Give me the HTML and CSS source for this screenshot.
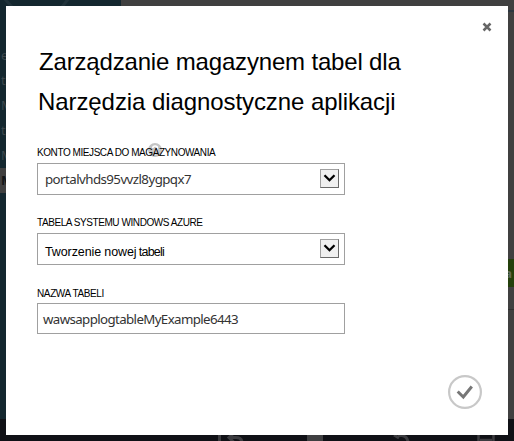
FILE: index.html
```html
<!DOCTYPE html>
<html lang="pl">
<head>
<meta charset="utf-8">
<title>Zarządzanie magazynem tabel</title>
<link rel="stylesheet" href="styles.css">
</head>
<body>
<div class="portal">
  <div class="workspace">
    <nav class="sidebar">
      <svg class="swirl" width="121" height="6" viewBox="0 0 121 6"><path d="M4-2 12 7M69-2 62 7" stroke="#20323a" stroke-width="3"/></svg>
      <ul class="sites"><li>e</li><li>to</li><li>M</li><li>to</li><li>M</li><li class="current">M</li></ul>
    </nav>
    <main class="content">
      <div class="rule-top"></div>
      <div class="badge">a</div>
      <div class="rule-bottom"></div>
    </main>
  </div>
  <footer class="commands">
    <svg width="514" height="22" viewBox="0 0 514 22" fill="none" stroke="#3b3b3f" stroke-width="3">
      <path d="M219.500 16v8M229 18.500h7q5 0 6 4M234 14l-5 4.500 5 5"/>
      <path d="M307 16h16v6h-16z" fill="#3f3f41" stroke="none"/>
      <path d="M394 16l5 3M398 16.500h4q5 1 6 6"/>
      <path d="M478.500 16v8M493.500 16v8M480 21h12" stroke-width="2.500"/>
    </svg>
  </footer>
</div>
<section class="dialog">
  <button class="close" aria-label="Zamknij"><svg width="10" height="10" viewBox="0 0 10 10"><path d="M1.500 1.500 8.500 8.500M8.500 1.500 1.500 8.500" stroke="#666" stroke-width="2.500"/></svg></button>
  <h1><span class="line-one">Zarządzanie magazynem tabel dla</span><br><span class="line-two">Narzędzia diagnostyczne aplikacji</span></h1>
  <div class="field">
    <div class="label"><svg class="help" width="14" height="14" viewBox="0 0 14 14"><circle cx="7" cy="7" r="7" fill="#c4c4c4"/><path d="M4.800 5q0-2 2.300-2t2.300 2q0 1.200-1.200 1.900T7 8.600M7 9.800v1.600" fill="none" stroke="#fff" stroke-width="1.600"/></svg><span class="label-text account">KONTO MIEJSCA DO MAGAZYNOWANIA</span></div>
    <div class="control select"><span class="value storage">portalvhds95vvzl8ygpqx7</span><span class="arrow"><svg width="17" height="17" viewBox="0 0 17 17"><path d="M3.500 5.200 8.500 10.200 13.500 5.200" fill="none" stroke="#000" stroke-width="2.300"/></svg></span></div>
  </div>
  <div class="field">
    <div class="label"><span class="label-text azure">TABELA SYSTEMU WINDOWS AZURE</span></div>
    <div class="control select"><span class="value create">Tworzenie nowej <span class="tight">tabeli</span></span><span class="arrow"><svg width="17" height="17" viewBox="0 0 17 17"><path d="M3.500 5.200 8.500 10.200 13.500 5.200" fill="none" stroke="#000" stroke-width="2.300"/></svg></span></div>
  </div>
  <div class="field">
    <div class="label"><span class="label-text table">NAZWA TABELI</span></div>
    <div class="control input"><span class="value name">wawsapplogtableMyExample6443</span></div>
  </div>
  <button class="confirm" aria-label="OK"><svg width="34" height="34" viewBox="0 0 34 34" fill="none"><circle cx="17" cy="17" r="15.900" stroke="#c8c8c8" stroke-width="2.200"/><path d="M9.700 16.500 15.300 22 23.800 11.500" stroke="#777" stroke-width="3"/></svg></button>
</section>
</body>
</html>
```
FILE: styles.css
```css
* { box-sizing: border-box; }
body { margin: 0; width: 514px; height: 441px; overflow: hidden; font-family: "Liberation Sans", Arial, sans-serif; }
.portal { height: 441px; display: flex; flex-direction: column; background: #404040; }
.workspace { display: flex; height: 419px; }
.sidebar { width: 121px; background: #14272f; overflow: hidden; }
.swirl { display: block; }
.sites { list-style: none; margin: 37px 0 0; padding: 0; font: 13px/25px "Open Sans", sans-serif; color: #3f494e; }
.sites li { height: 25px; padding-left: 1px; }
.sites .current { background: #404040; color: #101417; font-weight: bold; }
.content { flex: 1; padding-top: 10px; }
.rule-top { height: 2px; background: #2c3740; }
.badge { margin-top: 247px; height: 28px; background: #24400c; color: #626c58; text-align: right; padding-right: 2px; font: bold 13px/28px "Open Sans", sans-serif; }
.rule-bottom { margin-top: 22px; height: 1px; background: #303030; }
.commands { height: 22px; background: #101116; }
.commands svg { display: block; }

.dialog { position: absolute; left: 6px; top: 6px; width: 502px; height: 429px; background: #fff; padding: 15px 25px 0 31px; display: flex; flex-direction: column; }
button { border: 0; background: none; padding: 0; display: block; }
.close { width: 10px; height: 10px; align-self: flex-end; margin-right: -9px; margin-top: 1px; }
.close svg, .confirm svg { display: block; }
h1 { margin: 10px 0 0 2px; font-size: 24px; line-height: 40px; font-weight: normal; color: #000; white-space: nowrap; }
.line-one { letter-spacing: -.17px; }
.line-two { letter-spacing: -.08px; margin-left: -1px; }
.field { width: 308px; margin-bottom: 24px; }
.label { position: relative; height: 16px; font-size: 10px; line-height: 11px; color: #000; white-space: nowrap; }
h1 + .field { margin: 25px 0 22px; }
.field:nth-of-type(2) { margin-bottom: 23px; }
.field:nth-of-type(3) .label { height: 15px; }
.label-text { position: relative; letter-spacing: -.43px; }
.table { letter-spacing: -.38px; }
.help { position: absolute; left: 111px; top: -4px; }
.control { height: 32px; border: 1px solid #a0a0a0; background: #fff; display: flex; align-items: center; justify-content: space-between; white-space: nowrap; }
.select { padding: 0 5px 0 7px; }
.input { height: 31px; padding-left: 5px; }
.value { color: #333; font: 13.300px/20px "Noto Sans", "Open Sans", sans-serif; }
.storage { letter-spacing: -.56px; }
.name { letter-spacing: -.62px; }
.create { color: #000; font: 12.500px/20px "Liberation Sans", sans-serif; padding-top: 6px; letter-spacing: -.11px; }
.tight { letter-spacing: -.8px; margin-left: -1px; }
.arrow { width: 19px; height: 19px; margin-bottom: 1px; border: 1px solid #a0a0a0; border-right-color: #696969; border-bottom-color: #696969; background: #f0f0f0; }
.arrow svg { display: block; }
.confirm { align-self: flex-end; width: 34px; height: 34px; margin: 17px 1px 0 0; }
```
